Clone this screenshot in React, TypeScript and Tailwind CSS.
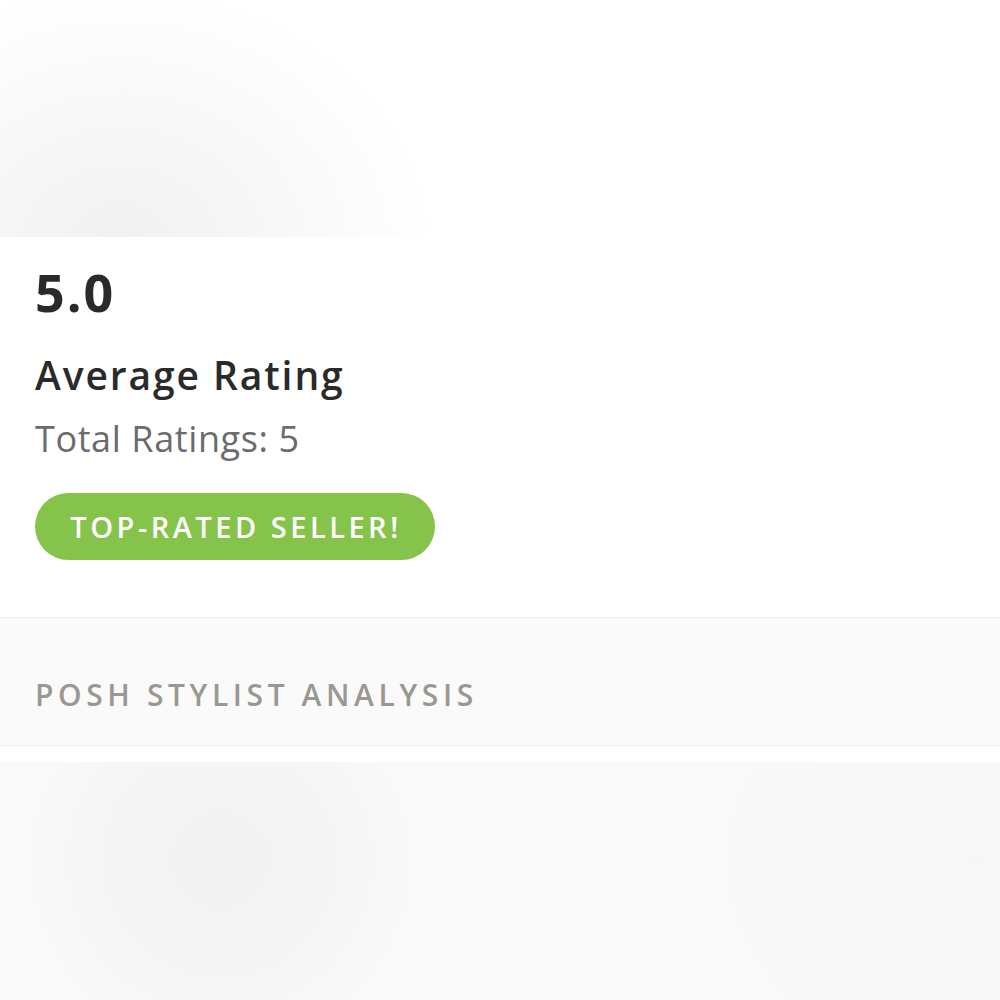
export default function App() {
  return (
    <div className="w-[1000px] h-[1000px] overflow-hidden bg-white flex flex-col font-['Open_Sans','Liberation_Sans',sans-serif]">
      {/* blurred photo area above */}
      <div className="h-[237px] shrink-0 bg-[radial-gradient(ellipse_320px_270px_at_120px_250px,#f1f1f1_0%,#f7f7f7_45%,#ffffff_100%)]" />

      {/* rating card */}
      <div className="h-[380px] shrink-0 bg-white px-[35px] pt-[29px] flex flex-col items-start">
        <div className="text-[52px] leading-none font-bold tracking-[2px] text-[#2a2a2a]">5.0</div>
        <div className="mt-[37px] text-[39px] leading-none font-semibold tracking-[1.9px] text-[#2a2a2a]">Average Rating</div>
        <div className="mt-[27px] text-[36px] leading-none tracking-[0.6px] text-[#6b6b6b]">Total Ratings: 5</div>
        <div className="mt-[36px] w-[400px] h-[67px] rounded-full bg-[#86c34b] flex items-center justify-center pl-[2px] text-white text-[29px] font-semibold tracking-[3.5px]">
          TOP-RATED SELLER!
        </div>
      </div>

      {/* section header */}
      <div className="h-[129px] shrink-0 border-y border-[#f1efed] bg-[#fafafa] px-[35px] pt-[62px]">
        <div className="text-[30px] leading-none font-semibold tracking-[4.6px] text-[#9b9892]">POSH STYLIST ANALYSIS</div>
      </div>

      <div className="h-[16px] shrink-0 bg-white" />

      {/* blurred content below */}
      <div className="flex-1 bg-[#f9f9f9] bg-[radial-gradient(circle_190px_at_220px_860px,#f2f2f2_0%,#f5f5f5_60%,transparent_100%),radial-gradient(ellipse_260px_220px_at_980px_860px,#f7f7f7_0%,transparent_100%)] [background-attachment:fixed]" />
    </div>
  )
}
